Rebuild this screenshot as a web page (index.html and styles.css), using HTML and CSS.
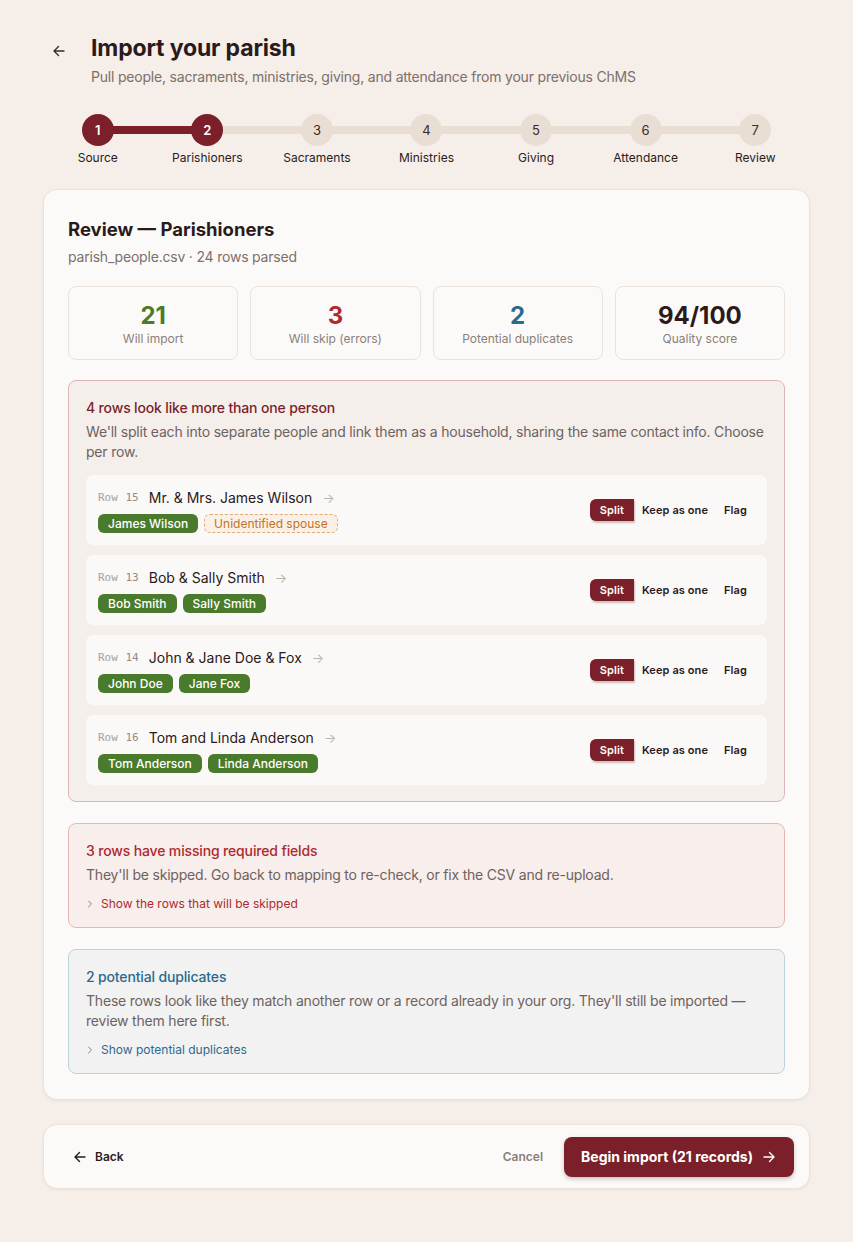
FILE: index.html
```
<!DOCTYPE html>
<html>
<head>
    <title>Import your parish</title>
    <link rel="stylesheet" href="styles.css">
</head>
<body>
    <div id="page">
        <div class="header">
            <button class="back-btn" aria-label="Back">
                <svg width="16" height="16" viewBox="0 0 16 16" fill="none" stroke="currentColor" stroke-width="1.4" stroke-linecap="round" stroke-linejoin="round"><path d="M13 8H3M7.5 3.5L3 8l4.5 4.5"/></svg>
            </button>
            <div>
                <h1>Import your parish</h1>
                <p class="subtitle">Pull people, sacraments, ministries, giving, and attendance from your previous ChMS</p>
            </div>
        </div>

        <div class="stepper">
            <div class="track"><div class="track-fill"></div></div>
            <div class="step done"><span class="dot">1</span><span class="step-label">Source</span></div>
            <div class="step done"><span class="dot">2</span><span class="step-label">Parishioners</span></div>
            <div class="step"><span class="dot">3</span><span class="step-label">Sacraments</span></div>
            <div class="step"><span class="dot">4</span><span class="step-label">Ministries</span></div>
            <div class="step"><span class="dot">5</span><span class="step-label">Giving</span></div>
            <div class="step"><span class="dot">6</span><span class="step-label">Attendance</span></div>
            <div class="step"><span class="dot">7</span><span class="step-label">Review</span></div>
        </div>

        <div class="card">
            <h2>Review — Parishioners</h2>
            <p class="file-info">parish_people.csv · 24 rows parsed</p>

            <div class="stats">
                <div class="stat"><div class="stat-num green">21</div><div class="stat-label">Will import</div></div>
                <div class="stat"><div class="stat-num red">3</div><div class="stat-label">Will skip (errors)</div></div>
                <div class="stat"><div class="stat-num blue">2</div><div class="stat-label">Potential duplicates</div></div>
                <div class="stat"><div class="stat-num">94/100</div><div class="stat-label">Quality score</div></div>
            </div>

            <div class="panel panel-split">
                <div class="panel-title">4 rows look like more than one person</div>
                <p class="panel-text">We'll split each into separate people and link them as a household, sharing the same contact info. Choose per row.</p>

                <div class="split-rows">
                    <div class="split-row">
                        <div class="split-info">
                            <div class="split-head">
                                <span class="row-no">Row <b>15</b></span>
                                <span class="row-name">Mr. &amp; Mrs. James Wilson</span>
                                <span class="row-arrow">→</span>
                            </div>
                            <div class="tags">
                                <span class="tag">James Wilson</span>
                                <span class="tag tag-unknown">Unidentified spouse</span>
                            </div>
                        </div>
                        <div class="choices">
                            <button class="choice active">Split</button>
                            <button class="choice">Keep as one</button>
                            <button class="choice">Flag</button>
                        </div>
                    </div>

                    <div class="split-row">
                        <div class="split-info">
                            <div class="split-head">
                                <span class="row-no">Row <b>13</b></span>
                                <span class="row-name">Bob &amp; Sally Smith</span>
                                <span class="row-arrow">→</span>
                            </div>
                            <div class="tags">
                                <span class="tag">Bob Smith</span>
                                <span class="tag">Sally Smith</span>
                            </div>
                        </div>
                        <div class="choices">
                            <button class="choice active">Split</button>
                            <button class="choice">Keep as one</button>
                            <button class="choice">Flag</button>
                        </div>
                    </div>

                    <div class="split-row">
                        <div class="split-info">
                            <div class="split-head">
                                <span class="row-no">Row <b>14</b></span>
                                <span class="row-name">John &amp; Jane Doe &amp; Fox</span>
                                <span class="row-arrow">→</span>
                            </div>
                            <div class="tags">
                                <span class="tag">John Doe</span>
                                <span class="tag">Jane Fox</span>
                            </div>
                        </div>
                        <div class="choices">
                            <button class="choice active">Split</button>
                            <button class="choice">Keep as one</button>
                            <button class="choice">Flag</button>
                        </div>
                    </div>

                    <div class="split-row">
                        <div class="split-info">
                            <div class="split-head">
                                <span class="row-no">Row <b>16</b></span>
                                <span class="row-name">Tom and Linda Anderson</span>
                                <span class="row-arrow">→</span>
                            </div>
                            <div class="tags">
                                <span class="tag">Tom Anderson</span>
                                <span class="tag">Linda Anderson</span>
                            </div>
                        </div>
                        <div class="choices">
                            <button class="choice active">Split</button>
                            <button class="choice">Keep as one</button>
                            <button class="choice">Flag</button>
                        </div>
                    </div>
                </div>
            </div>

            <div class="panel panel-error">
                <div class="panel-title">3 rows have missing required fields</div>
                <p class="panel-text">They'll be skipped. Go back to mapping to re-check, or fix the CSV and re-upload.</p>
                <a class="panel-link" href="#">
                    <svg width="8" height="8" viewBox="0 0 8 8" fill="none" stroke="#8a7f7a" stroke-width="1" stroke-linecap="round" stroke-linejoin="round"><path d="M2.5 1l3 3-3 3"/></svg>
                    Show the rows that will be skipped
                </a>
            </div>

            <div class="panel panel-dup">
                <div class="panel-title">2 potential duplicates</div>
                <p class="panel-text">These rows look like they match another row or a record already in your org. They'll still be imported — review them here first.</p>
                <a class="panel-link" href="#">
                    <svg width="8" height="8" viewBox="0 0 8 8" fill="none" stroke="#8a7f7a" stroke-width="1" stroke-linecap="round" stroke-linejoin="round"><path d="M2.5 1l3 3-3 3"/></svg>
                    Show potential duplicates
                </a>
            </div>
        </div>

        <div class="footer">
            <button class="footer-back">
                <svg width="16" height="16" viewBox="0 0 16 16" fill="none" stroke="currentColor" stroke-width="1.4" stroke-linecap="round" stroke-linejoin="round"><path d="M13 8H3M7.5 3.5L3 8l4.5 4.5"/></svg>
                Back
            </button>
            <div class="footer-actions">
                <button class="cancel-btn">Cancel</button>
                <button class="primary-btn">
                    Begin import (21 records)
                    <svg width="16" height="16" viewBox="0 0 16 16" fill="none" stroke="currentColor" stroke-width="1.4" stroke-linecap="round" stroke-linejoin="round"><path d="M3 8h10M8.5 3.5L13 8l-4.5 4.5"/></svg>
                </button>
            </div>
        </div>
    </div>
</body>
</html>
```

FILE: styles.css
```
body {
    margin: 0;
    background-color: #f5eee9;
    font-family: Inter, "Noto Sans", sans-serif;
    color: #2a1a1b;
}

button {
    font-family: inherit;
    border: none;
    background: none;
    cursor: pointer;
    padding: 0;
}

#page {
    padding: 32px 43px 52px;
}

/* header */
.header {
    display: flex;
    align-items: flex-start;
    gap: 24px;
    padding-left: 8px;
}

.back-btn {
    color: #3a2a2b;
    margin-top: 11px;
    display: flex;
}

h1 {
    font-size: 23px;
    font-weight: 700;
    margin: 0;
    line-height: 32px;
    letter-spacing: -0.15px;
}

.subtitle {
    margin: 4px 0 0;
    font-size: 14px;
    color: #7c706b;
    letter-spacing: -0.2px;
}

/* stepper */
.stepper {
    position: relative;
    display: grid;
    grid-template-columns: repeat(7, 1fr);
    margin-top: 29px;
}

.track {
    position: absolute;
    top: 12px;
    left: calc(100% / 14);
    right: calc(100% / 14);
    height: 8px;
    background-color: #e9ded4;
}

.track-fill {
    width: calc(100% / 6);
    height: 100%;
    background-color: #7b1f2a;
}

.step {
    position: relative;
    display: flex;
    flex-direction: column;
    align-items: center;
}

.dot {
    width: 32px;
    height: 32px;
    border-radius: 50%;
    background-color: #e9ded4;
    color: #3a2a2b;
    font-size: 13px;
    display: flex;
    align-items: center;
    justify-content: center;
}

.step.done .dot {
    background-color: #7b1f2a;
    color: white;
    font-weight: 600;
}

.step-label {
    margin-top: 4px;
    font-size: 12px;
    color: #2a1a1b;
}

/* main card */
.card {
    margin-top: 24px;
    background-color: #fcfaf8;
    border: 1px solid #ece2da;
    border-radius: 14px;
    box-shadow: 0 1px 3px rgba(60, 30, 20, 0.06);
    padding: 25px 24px 25px;
}

h2 {
    font-size: 18.5px;
    font-weight: 700;
    margin: 0;
    line-height: 28px;
}

.file-info {
    margin: 5px 0 0;
    font-size: 14px;
    color: #7c706b;
    letter-spacing: -0.2px;
}

.stats {
    display: grid;
    grid-template-columns: repeat(4, 1fr);
    gap: 12px;
    margin-top: 21px;
}

.stat {
    border: 1px solid #ece2da;
    border-radius: 8px;
    height: 71px;
    padding-top: 1px;
    display: flex;
    flex-direction: column;
    align-items: center;
    justify-content: center;
}

.stat-num {
    font-size: 24px;
    font-weight: 700;
    line-height: 28px;
    color: #2a1a1b;
}

.stat-num.green { color: #4a7a2c; }
.stat-num.red { color: #ad2a2e; }
.stat-num.blue { color: #2b6a8f; }

.stat-label {
    font-size: 12px;
    color: #8a7f7a;
    margin-top: 1px;
}

/* panels */
.panel {
    margin-top: 21px;
    border-radius: 8px;
    border: 1px solid;
    padding: 17px 17px 16px;
}

.stats + .panel {
    margin-top: 20px;
}

.panel-title {
    font-size: 14px;
    line-height: 20px;
    font-weight: 500;
    letter-spacing: -0.15px;
}

.panel-text {
    margin: 4px 0 0;
    font-size: 14px;
    line-height: 20px;
    color: #6e625e;
    letter-spacing: -0.2px;
}

.panel-link {
    display: flex;
    align-items: center;
    gap: 7px;
    margin-top: 11px;
    font-size: 12px;
    text-decoration: none;
}

.panel-split {
    background-color: #f5efec;
    border-color: #dcb6b6;
}

.panel-split .panel-title { color: #7b1f2a; }

.panel-error {
    background-color: #f8eeec;
    border-color: #e6b7b3;
}

.panel-error .panel-title,
.panel-error .panel-link { color: #ad2a2e; }

.panel-dup {
    background-color: #f3f2f2;
    border-color: #bcd2de;
}

.panel-dup .panel-title,
.panel-dup .panel-link { color: #2b6a8f; }

/* split rows */
.split-rows {
    display: flex;
    flex-direction: column;
    gap: 10px;
    margin-top: 13px;
}

.split-row {
    background-color: #fbf9f7;
    border-radius: 8px;
    height: 70px;
    padding: 0 12px;
    display: flex;
    align-items: center;
    justify-content: space-between;
}

.split-head {
    display: flex;
    align-items: center;
    gap: 10px;
    line-height: 20px;
}

.row-no {
    font-family: "DejaVu Sans Mono", monospace;
    font-size: 11px;
    color: #aaa09b;
    word-spacing: 1px;
}

.row-no b {
    font-weight: 400;
    color: #958a85;
}

.row-name {
    font-size: 14px;
    color: #2a1a1b;
}

.row-arrow {
    font-size: 13px;
    color: #bdb4ae;
}

.tags {
    display: flex;
    gap: 6px;
    margin-top: 6px;
}

.tag {
    background-color: #4a7a2c;
    color: white;
    font-size: 12px;
    font-weight: 500;
    line-height: 19px;
    padding: 0 10px;
    border-radius: 6px;
}

.tag-unknown {
    background-color: #fbf0e6;
    color: #c0742a;
    border: 1px dashed #e2a97a;
    line-height: 17px;
    font-weight: 400;
    padding: 0 9px;
}

.choices {
    display: flex;
    align-items: center;
}

.choice {
    font-size: 11px;
    font-weight: 600;
    letter-spacing: 0.1px;
    color: #2a1a1b;
    height: 22px;
    padding: 0 8px;
}

.choice.active {
    background-color: #7b1f2a;
    color: white;
    padding: 0 10px;
    border-radius: 6px 0 0 6px;
    box-shadow: 1px 2px 2px rgba(60, 20, 20, 0.25);
}

/* footer */
.footer {
    margin-top: 24px;
    background-color: #fcfaf8;
    border: 1px solid #ece2da;
    border-radius: 14px;
    box-shadow: 0 1px 3px rgba(60, 30, 20, 0.06);
    height: 63px;
    padding: 0 15px 0 28px;
    display: flex;
    align-items: center;
    justify-content: space-between;
}

.footer-back {
    display: flex;
    align-items: center;
    gap: 7px;
    font-size: 12px;
    font-weight: 600;
    color: #2a1a1b;
}

.footer-actions {
    display: flex;
    align-items: center;
    gap: 21px;
}

.cancel-btn {
    font-size: 12px;
    font-weight: 600;
    color: #8a7f7a;
}

.primary-btn {
    display: flex;
    align-items: center;
    gap: 8px;
    background-color: #7b1f2a;
    color: white;
    font-size: 14px;
    font-weight: 700;
    height: 40px;
    padding: 0 17px;
    border-radius: 8px;
    box-shadow: 0 2px 4px rgba(60, 20, 20, 0.25);
}
```
